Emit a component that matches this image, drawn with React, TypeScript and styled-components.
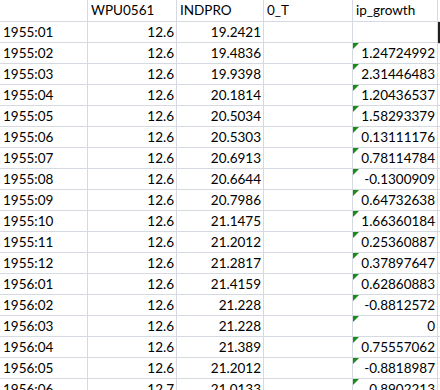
import React from "react";
import styled, { createGlobalStyle } from "styled-components";

const rows: [string, string, string, string][] = [
  ["1955:01", "12.6", "19.2421", ""],
  ["1955:02", "12.6", "19.4836", "1.24724992"],
  ["1955:03", "12.6", "19.9398", "2.31446483"],
  ["1955:04", "12.6", "20.1814", "1.20436537"],
  ["1955:05", "12.6", "20.5034", "1.58293379"],
  ["1955:06", "12.6", "20.5303", "0.13111176"],
  ["1955:07", "12.6", "20.6913", "0.78114784"],
  ["1955:08", "12.6", "20.6644", "-0.1300909"],
  ["1955:09", "12.6", "20.7986", "0.64732638"],
  ["1955:10", "12.6", "21.1475", "1.66360184"],
  ["1955:11", "12.6", "21.2012", "0.25360887"],
  ["1955:12", "12.6", "21.2817", "0.37897647"],
  ["1956:01", "12.6", "21.4159", "0.62860883"],
  ["1956:02", "12.6", "21.228", "-0.8812572"],
  ["1956:03", "12.6", "21.228", "0"],
  ["1956:04", "12.6", "21.389", "0.75557062"],
  ["1956:05", "12.6", "21.2012", "-0.8818987"],
  ["1956:06", "12.7", "21.0133", "0.8902213"],
];

const headers = ["", "WPU0561", "INDPRO", "0_T", "ip_growth"];

const GlobalStyle = createGlobalStyle`
  html, body {
    margin: 0;
    padding: 0;
    background: #fff;
    overflow: hidden;
  }
`;

// 시트 영역
const Sheet = styled.div`
  display: grid;
  grid-template-columns: 88px 89px 87px 89px 85px 1fr;
  grid-auto-rows: 21px;
  grid-template-rows: 22px;
  width: 440px;
  height: 390px;
  overflow: hidden;
  font-family: "Lato", "Liberation Sans", sans-serif;
  font-size: 13.5px;
  color: #000;
`;

const Cell = styled.div<{ $num?: boolean; $flag?: boolean }>`
  position: relative;
  box-sizing: border-box;
  border-right: 1px solid #d4d9e2;
  border-bottom: 1px solid #d4d9e2;
  padding: 0 2px 0 3px;
  line-height: 20px;
  white-space: nowrap;
  overflow: hidden;
  text-align: ${(p) => (p.$num ? "right" : "left")};

  ${(p) =>
    p.$flag &&
    `
    &::before {
      content: "";
      position: absolute;
      top: 0;
      left: 0;
      border-top: 6px solid #1a8a1a;
      border-right: 6px solid transparent;
    }
  `}
`;

const HeadCell = styled(Cell)`
  line-height: 21px;
`;

const EdgeCell = styled.div<{ $active?: boolean }>`
  box-sizing: border-box;
  border-bottom: 1px solid #d4d9e2;
  ${(p) =>
    p.$active &&
    `
    margin-left: -1px;
    margin-bottom: -1px;
    background: #1f1f1f;
  `}
`;

export default function App() {
  return (
    <>
      <GlobalStyle />
      <Sheet>
        {headers.map((h, i) => (
          <HeadCell key={i}>{h}</HeadCell>
        ))}
        <EdgeCell />
        {rows.map((r, i) => (
          <React.Fragment key={r[0]}>
            <Cell>{r[0]}</Cell>
            <Cell $num>{r[1]}</Cell>
            <Cell $num>{r[2]}</Cell>
            <Cell />
            <Cell $num $flag={r[3] !== ""}>
              {r[3]}
            </Cell>
            <EdgeCell $active={i === 0} />
          </React.Fragment>
        ))}
      </Sheet>
    </>
  );
}
